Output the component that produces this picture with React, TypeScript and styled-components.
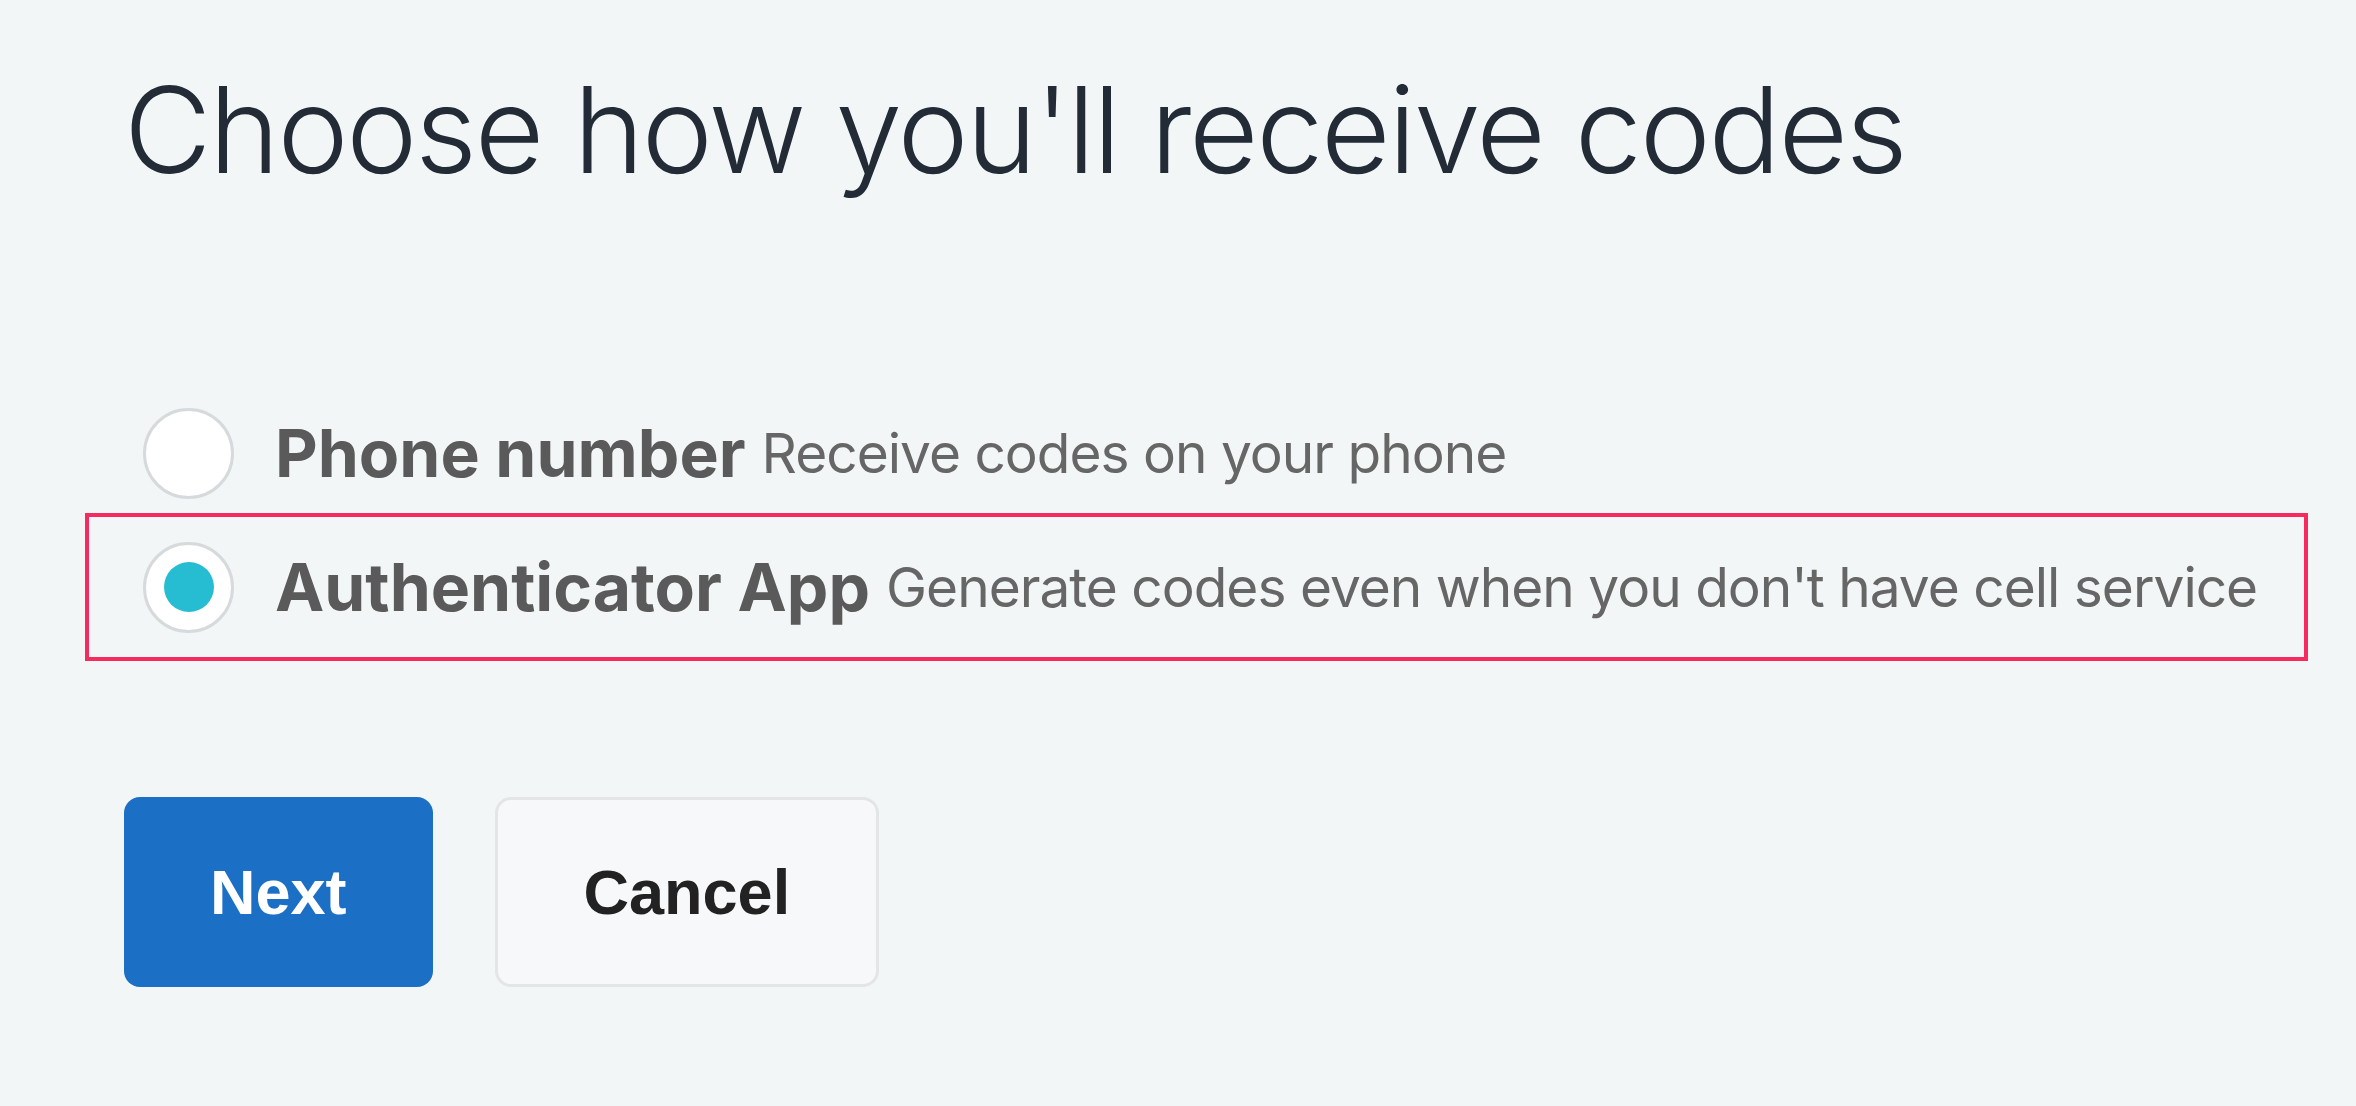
import React, { useState } from 'react';
import styled, { createGlobalStyle, css } from 'styled-components';

const GlobalStyle = createGlobalStyle`
  html, body {
    margin: 0;
    padding: 0;
    background: #f3f6f7;
  }
  * {
    box-sizing: border-box;
  }
`;

const Page = styled.main`
  min-height: 100vh;
  padding: 58px 124px 0;
  font-family: Inter, 'Noto Sans', sans-serif;
`;

const Title = styled.h1`
  margin: 0;
  font-size: 120px;
  line-height: 144px;
  font-weight: 300;
  letter-spacing: -2.3px;
  color: #222b36;
`;

const Options = styled.div`
  display: flex;
  flex-direction: column;
  align-items: flex-start;
  margin-top: 184px;
`;

const Option = styled.label<{ selected?: boolean }>`
  display: flex;
  align-items: center;
  height: 134px;
  padding: 0 44px 0 51px;
  margin-left: -32px;
  cursor: pointer;

  ${({ selected }) =>
    selected &&
    css`
      outline: 4px solid #f52a5e;
      outline-offset: 3px;
    `}
`;

const Radio = styled.span<{ checked?: boolean }>`
  display: flex;
  align-items: center;
  justify-content: center;
  flex: none;
  width: 91px;
  height: 91px;
  border-radius: 50%;
  border: 3px solid #d7dadd;
  background: #ffffff;
  margin-right: 41px;

  &::after {
    content: '';
    width: 50px;
    height: 50px;
    border-radius: 50%;
    background: ${({ checked }) => (checked ? '#26bcd1' : 'transparent')};
  }
`;

const Label = styled.span`
  font-size: 66px;
  font-weight: 700;
  color: #5a5a5a;
  white-space: nowrap;
`;

const Description = styled.span`
  font-size: 55px;
  font-weight: 400;
  letter-spacing: -1px;
  color: #666666;
  margin-left: 16px;
  white-space: nowrap;
`;

const Actions = styled.div`
  display: flex;
  gap: 62px;
  margin-top: 143px;
`;

const Button = styled.button<{ primary?: boolean }>`
  height: 190px;
  padding: 0 86px;
  border-radius: 16px;
  font-family: 'Liberation Sans', Arial, sans-serif;
  font-size: 63px;
  font-weight: 700;
  cursor: pointer;
  border: 3px solid #e3e5e6;
  background: #f6f8f9;
  color: #222222;

  ${({ primary }) =>
    primary &&
    css`
      border: none;
      background: #1b6fc4;
      color: #ffffff;
    `}
`;

const methods = [
  { id: 'phone', label: 'Phone number', description: 'Receive codes on your phone' },
  {
    id: 'app',
    label: 'Authenticator App',
    description: "Generate codes even when you don't have cell service",
  },
];

const App = () => {
  const [method, setMethod] = useState('app');

  return (
    <>
      <GlobalStyle />
      <Page>
        <Title>Choose how you'll receive codes</Title>
        <Options>
          {methods.map((m) => (
            <Option key={m.id} selected={m.id === method} onClick={() => setMethod(m.id)}>
              <Radio checked={m.id === method} />
              <Label>{m.label}</Label>
              <Description>{m.description}</Description>
            </Option>
          ))}
        </Options>
        <Actions>
          <Button primary>Next</Button>
          <Button>Cancel</Button>
        </Actions>
      </Page>
    </>
  );
};

export default App;
